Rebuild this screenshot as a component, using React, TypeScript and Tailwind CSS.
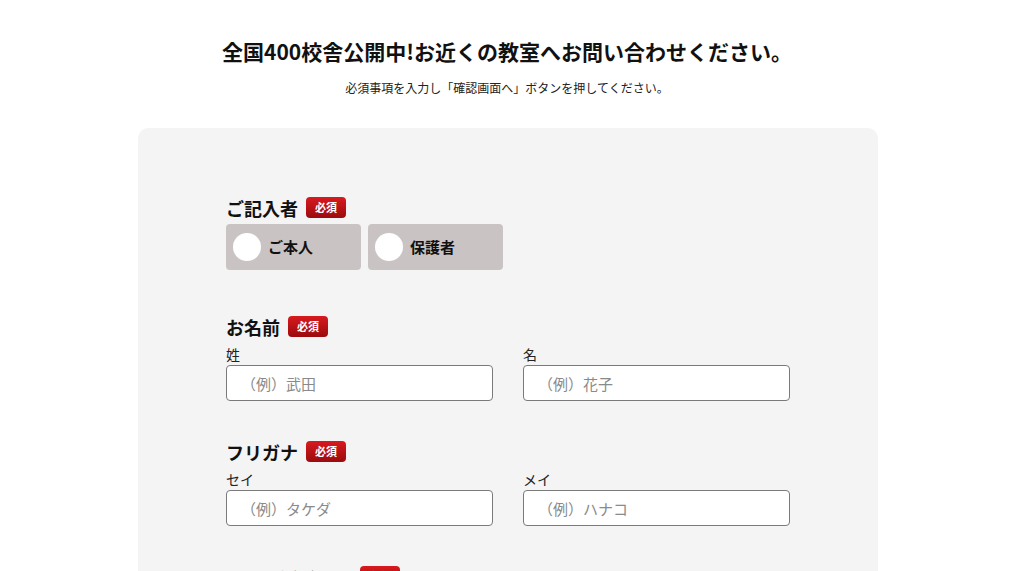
import React from "react";

const font = {
  fontFamily: '"Noto Sans CJK JP", "Noto Sans", sans-serif',
};

function Badge() {
  return (
    <span className="ml-[8px] inline-flex h-[21px] w-[40px] items-center justify-center rounded-[4px] bg-gradient-to-b from-[#d81a1f] to-[#9b0b0e] text-[11px] font-bold leading-none text-white">
      必須
    </span>
  );
}

function SectionLabel({ children }: { children: React.ReactNode }) {
  return (
    <div className="flex h-[21px] items-center">
      <span className="text-[18px] font-bold leading-none text-[#111]">{children}</span>
      <Badge />
    </div>
  );
}

function Field({ label, placeholder }: { label: string; placeholder: string }) {
  return (
    <div className="flex flex-col">
      <span className="mt-[7px] h-[20px] text-[14px] leading-[20px] text-[#222]">{label}</span>
      <input
        placeholder={placeholder}
        className="mt-[1px] h-[36px] w-full rounded-[4px] border border-[#7a7a7a] bg-white px-[14px] text-[15px] text-[#222] placeholder:text-[#8a8a8a] focus:outline-none"
      />
    </div>
  );
}

function Radio({ label }: { label: string }) {
  return (
    <label className="flex h-[46px] w-[135px] cursor-pointer items-center rounded-[4px] bg-[#c9c3c3] pl-[7px]">
      <span className="h-[28px] w-[28px] rounded-full bg-white" />
      <span className="ml-[7px] text-[15px] font-bold text-[#111]">{label}</span>
    </label>
  );
}

export default function App() {
  return (
    <div className="min-h-screen w-full bg-white" style={font}>
      <div className="w-[1014px]">
        <h1 className="pt-[37px] text-center text-[21px] font-bold leading-[28px] text-[#111]">
          全国400校舎公開中!お近くの教室へお問い合わせください。
        </h1>
        <p className="mt-[14px] text-center text-[12px] leading-[18px] text-[#222]">
          必須事項を入力し「確認画面へ」ボタンを押してください。
        </p>

        <div className="ml-[138px] mt-[31px] w-[740px] rounded-[10px] bg-[#f4f4f4] px-[88px] pb-[80px] pt-[69px]">
          <section>
            <SectionLabel>ご記入者</SectionLabel>
            <div className="mt-[6px] flex gap-[7px]">
              <Radio label="ご本人" />
              <Radio label="保護者" />
            </div>
          </section>

          <section className="mt-[46px]">
            <SectionLabel>お名前</SectionLabel>
            <div className="grid w-[564px] grid-cols-2 gap-x-[30px]">
              <Field label="姓" placeholder="（例）武田" />
              <Field label="名" placeholder="（例）花子" />
            </div>
          </section>

          <section className="mt-[40px]">
            <SectionLabel>フリガナ</SectionLabel>
            <div className="grid w-[564px] grid-cols-2 gap-x-[30px]">
              <Field label="セイ" placeholder="（例）タケダ" />
              <Field label="メイ" placeholder="（例）ハナコ" />
            </div>
          </section>

          <section className="mt-[40px]">
            <SectionLabel>メールアドレス</SectionLabel>
            <div className="w-[564px]">
              <Field label="" placeholder="（例）example@example.com" />
            </div>
          </section>
        </div>
      </div>
    </div>
  );
}
